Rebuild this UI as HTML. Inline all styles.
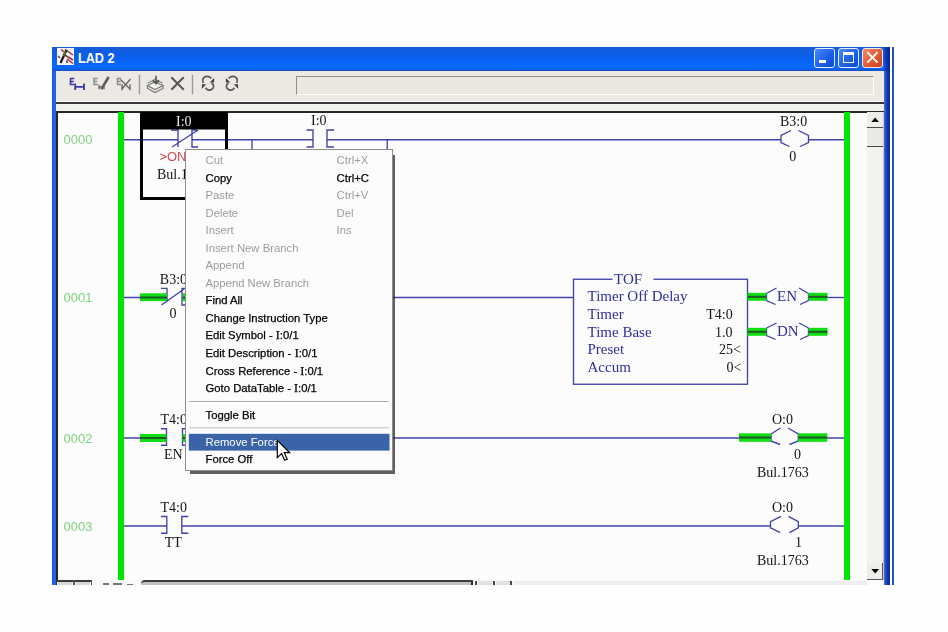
<!DOCTYPE html>
<html><head><meta charset="utf-8">
<style>
*{margin:0;padding:0;box-sizing:border-box}
html,body{width:948px;height:632px;overflow:hidden;background:#fefefe;font-family:"Liberation Sans",sans-serif}
.a{position:absolute}
#win{left:52px;top:47px;width:838px;height:538px;background:#0a5ae0;overflow:hidden}
#title{left:0;top:0;width:838px;height:24px;background:linear-gradient(#1a5cd6 0%,#0d5de4 25%,#0862f4 55%,#0a69ff 80%,#0a62f0 92%,#1e4cb8 100%)}
#ttext{left:25.5px;top:2.5px;color:#fff;font:bold 14px "Liberation Sans",sans-serif;transform:scaleX(0.9);transform-origin:0 0;white-space:nowrap}
#tb{left:4px;top:24px;width:828px;height:32px;background:#ece9e4}
#edit{left:239.5px;top:5px;width:578.5px;height:19px;border-top:1px solid #8e9384;border-left:1px solid #8e9384;border-bottom:1px solid #fff;border-right:1px solid #fff;background:#ebe8e2}
#content{left:5.5px;top:65.5px;width:826.5px;height:473px;background:#fcfcfc}
svg{position:absolute;left:0;top:0;will-change:transform}
.sf{font-family:"Liberation Serif",serif}
.ss{font-family:"Liberation Sans",sans-serif}
</style></head><body>
<div id="win" class="a">
  <div id="title" class="a"></div>
  <div id="ttext" class="a">LAD 2</div>
  <div class="a" style="left:831px;top:0;width:7px;height:24px;background:linear-gradient(90deg,rgba(10,40,160,0),#0a2a9a 70%,#0a2a90)"></div>
  <div id="tb" class="a">
    <div id="edit" class="a"></div>
  </div>
  <div class="a" style="left:4px;top:54px;width:828px;height:1px;background:#fbfaf8"></div>
  <div class="a" style="left:4px;top:55px;width:828px;height:2px;background:#3a3a3a"></div>
  <div class="a" style="left:4px;top:57px;width:828px;height:7px;background:#f3f1ec"></div>
  <div class="a" style="left:4px;top:64px;width:828px;height:1.5px;background:#262626"></div>
  <div class="a" style="left:4px;top:64px;width:1.5px;height:474px;background:#262626"></div>
  <div id="content" class="a"></div>
</div>
<div class="a" style="left:892px;top:47px;width:2px;height:538px;background:#2050c8"></div>
<svg width="948" height="632" viewBox="0 0 948 632">
 <g id="ladder">
  <!-- rails -->
  <rect x="118" y="112" width="6" height="468" fill="#00e400"/>
  <rect x="844" y="112" width="6" height="468" fill="#00e400"/>
  <!-- rung numbers -->
  <g class="ss" font-size="13" fill="#80d480">
   <text x="63.5" y="144">0000</text>
   <text x="63.5" y="302">0001</text>
   <text x="63.5" y="442.5">0002</text>
   <text x="63.5" y="530.5">0003</text>
  </g>
  <g stroke="#4242ac" stroke-width="1.35" fill="none">
   <!-- rung 0 -->
   <path d="M124 139.75H178M192 139.75H313M327 139.75H781M809 139.75H844"/>
   <path d="M171 130H178V147M198 130H192V147H198M172 147L198 130"/>
   <path d="M306.5 130H313V147H306.5M334 130H327V147H334"/>
   <path d="M252 139.75V150M387.25 139.75V150"/>
   <path d="M791 130.5L781 135.5V142.5L789.5 146.5M798.5 130.5L808.5 135.5V142.5L800 146.5"/>
   <!-- rung 1 -->
   <path d="M124 297.5H140M392 297.5H573.5"/>
   <path d="M161 288.3H167V302M186 288.3H182V305H186M161.5 305L184 289"/>
   <rect x="573.5" y="279.25" width="174" height="105"/>
   <path d="M766.5 293.5L776.5 288M766.5 293.5V300.5L775.5 304.5M808.5 293.5L799 288M808.5 293.5V300.5L800 304.5"/>
   <path d="M766.5 328L776.5 323M766.5 328V335.5L775.5 339.5M808.5 328L799 323M808.5 328V335.5L800 339.5"/>
   <path d="M827 297.5H844"/>
   <!-- rung 2 -->
   <path d="M124 438H140M392 438H739M827 438H844"/>
   <path d="M161 428.7H166.5V445.2H161M188 428.7H182.5V445.2H188"/>
   <path d="M780.5 428L771 434V441L780 444.5M788 428L798.3 434V441L789.5 444.5"/>
   <!-- rung 3 -->
   <path d="M124 526H167M182 526H770.5M798.3 526H844"/>
   <path d="M161 516.5H166.8V533.2H161M188.3 516.5H181.8V533.2H188.3"/>
   <path d="M781 516.3L770.5 521.6V527.8L780.2 532.6M788.4 516.3L798.3 521.6V527.8L789.4 532.6"/>
  </g>
  <!-- energized bars -->
  <g>
   <rect x="140" y="293.3" width="27" height="7.8" fill="#12dc12"/>
   <rect x="182.5" y="293.3" width="10" height="7.8" fill="#12dc12"/>
   <rect x="747.5" y="292.8" width="19" height="8" fill="#12dc12"/>
   <rect x="808.5" y="292.8" width="19" height="8" fill="#12dc12"/>
   <rect x="747.5" y="327.8" width="19" height="8" fill="#12dc12"/>
   <rect x="808.5" y="327.8" width="19" height="8" fill="#12dc12"/>
   <rect x="140" y="434" width="26.5" height="8" fill="#12dc12"/>
   <rect x="182.5" y="434" width="10" height="8" fill="#12dc12"/>
   <rect x="739" y="433.3" width="32" height="8.5" fill="#12dc12"/>
   <rect x="798.3" y="433.3" width="29" height="8.5" fill="#12dc12"/>
   <g fill="#1d5a2a">
    <rect x="140" y="296.5" width="27" height="2"/>
    <rect x="182.5" y="296.5" width="10" height="2"/>
    <rect x="747.5" y="295.8" width="19" height="2"/>
    <rect x="808.5" y="295.8" width="19" height="2"/>
    <rect x="747.5" y="330.8" width="19" height="2"/>
    <rect x="808.5" y="330.8" width="19" height="2"/>
    <rect x="140" y="437" width="26.5" height="2"/>
    <rect x="182.5" y="437" width="10" height="2"/>
    <rect x="739" y="436.5" width="32" height="2"/>
    <rect x="798.3" y="436.5" width="29" height="2"/>
   </g>
  </g>
  <!-- selection box -->
  <path d="M141.5 113.5H226.5V198.5H141.5Z" fill="none" stroke="#000" stroke-width="3"/>
  <rect x="140" y="112" width="88" height="17.5" fill="#000"/>
  <!-- labels -->
  <g class="sf" font-size="14" fill="#141414">
   <text x="176" y="125.5" fill="#e8e8e8">I:0</text>
   <text x="311" y="125.3">I:0</text>
   <text x="780" y="125.7">B3:0</text>
   <text x="789.3" y="160.5">0</text>
   <text x="157" y="178.6">Bul.1763</text>
   <text x="159.8" y="283.5">B3:0</text>
   <text x="169.6" y="318.3">0</text>
   <text x="706.2" y="318.7">T4:0</text>
   <text x="715" y="336.7">1.0</text>
   <text x="719" y="354.2">25&lt;</text>
   <text x="726.5" y="371.6">0&lt;</text>
   <text x="160.5" y="424.1">T4:0</text>
   <text x="163.9" y="459">EN</text>
   <text x="772" y="423.6">O:0</text>
   <text x="794" y="459">0</text>
   <text x="757" y="476.8">Bul.1763</text>
   <text x="160.5" y="512.2">T4:0</text>
   <text x="164.7" y="547">TT</text>
   <text x="772" y="512.3">O:0</text>
   <text x="795" y="547.1">1</text>
   <text x="757" y="564.7">Bul.1763</text>
  </g>
  <text class="ss" x="159.4" y="160.6" font-size="13" fill="#d04848">&gt;ON</text>
  <g class="sf" font-size="15" fill="#2e2e9c">
   <rect x="612.5" y="272" width="41" height="12" fill="#fcfcfc"/>
   <text x="614" y="284">TOF</text>
   <text x="587.5" y="301.4">Timer Off Delay</text>
   <text x="587.5" y="318.7">Timer</text>
   <text x="587.5" y="336.7">Time Base</text>
   <text x="587.5" y="354.2">Preset</text>
   <text x="587.5" y="371.6">Accum</text>
   <text x="777" y="300.5" font-size="15">EN</text>
   <text x="777" y="335.5" font-size="15">DN</text>
  </g>
 </g>
</svg>

<!-- vertical scrollbar -->
<div class="a" style="left:867px;top:112px;width:16px;height:468px;background:#f3f2ef"></div>
<div class="a" style="left:867px;top:112px;width:16px;height:16px;background:#efeeea;border-bottom:1px solid #4a4a4a"></div>
<svg class="a" style="left:867px;top:112px" width="16" height="16"><path d="M4.3 10H12L8.2 5.6Z" fill="#000"/></svg>
<div class="a" style="left:867px;top:128px;width:16px;height:18.5px;background:#ebe9e3;border-bottom:1.5px solid #454545"></div>
<div class="a" style="left:867px;top:563px;width:16px;height:17px;background:#efeeea;border-right:1.5px solid #555;border-bottom:1.5px solid #555"></div>
<svg class="a" style="left:867px;top:563px" width="16" height="16"><path d="M4.3 6H12L8.2 10.4Z" fill="#000"/></svg>
<div class="a" style="left:882.5px;top:112px;width:1.5px;height:468px;background:#c8c6c0"></div>
<!-- bottom bar -->
<div class="a" style="left:57px;top:580px;width:810px;height:5px;background:#fafafa"></div>
<div class="a" style="left:56px;top:580px;width:36px;height:1.5px;background:#3a3a3a"></div>
<div class="a" style="left:73px;top:580px;width:1.5px;height:5px;background:#555"></div>
<div class="a" style="left:90.5px;top:580px;width:1.5px;height:5px;background:#555"></div>
<div class="a" style="left:58px;top:582px;width:14px;height:3px;background:#d8d8d8"></div>
<div class="a" style="left:76px;top:582px;width:14px;height:3px;background:#d8d8d8"></div>
<div class="a" style="left:141px;top:580px;width:332px;height:5px;background:#c2c2c2;border-top:2px solid #3c3c3c;border-top-left-radius:4px;border-right:2px solid #222"></div>
<div class="a" style="left:103px;top:583px;width:6px;height:2px;background:#777"></div>
<div class="a" style="left:113px;top:583px;width:9px;height:2px;background:#777"></div>
<div class="a" style="left:127px;top:584px;width:6px;height:1px;background:#777"></div>
<div class="a" style="left:475px;top:580.5px;width:2px;height:4.5px;background:#444"></div>
<div class="a" style="left:478px;top:581px;width:14px;height:4px;background:#e2e2e2"></div>
<div class="a" style="left:492.5px;top:580.5px;width:2px;height:4.5px;background:#444"></div>
<div class="a" style="left:496px;top:581px;width:14px;height:4px;background:#e2e2e2"></div>
<div class="a" style="left:510px;top:580.5px;width:2px;height:4.5px;background:#444"></div>
<div class="a" style="left:513px;top:581px;width:354px;height:4px;background:#efefef"></div>
<!-- window right border -->
<div class="a" style="left:884px;top:71px;width:6px;height:514px;background:linear-gradient(90deg,#3a7ae8 0,#2454c4 25%,#1838a8 55%,#0c2890 100%)"></div>
<div class="a" style="left:52px;top:71px;width:4px;height:514px;background:linear-gradient(90deg,#1050d8,#2a6ae8 60%,#1a58d8)"></div>

<!-- title icon -->
<svg class="a" style="left:57px;top:48px" width="17" height="17" viewBox="0 0 17 17">
 <rect width="17" height="17" fill="#f6f2f2"/>
 <path d="M4 1.5L7 4M8 1.5L16 7M6 6L16 12M10 11L16 15.5M1 8L3 10" stroke="#9a3030" stroke-width="1.5"/>
 <path d="M10 12.5V15" stroke="#503070" stroke-width="1.6"/>
 <path d="M9.5 2L3.5 15" stroke="#1a1a1a" stroke-width="2.2"/>
 <path d="M8.5 3.5L6.5 8" stroke="#4a9a4a" stroke-width="1.2"/>
</svg>
<!-- title buttons -->
<div class="a" style="left:813.5px;top:47.5px;width:21.5px;height:20.5px;border:1px solid #e8eefc;border-radius:3px;background:linear-gradient(135deg,#4a8af8,#1a5ee8 60%,#0c4ad0)"></div>
<div class="a" style="left:819px;top:59.5px;width:7px;height:3px;background:#fff"></div>
<div class="a" style="left:837.5px;top:47.5px;width:21.5px;height:20.5px;border:1px solid #e8eefc;border-radius:3px;background:linear-gradient(135deg,#4a8af8,#1a5ee8 60%,#0c4ad0)"></div>
<div class="a" style="left:842.5px;top:51.8px;width:11.8px;height:10.8px;border:1.6px solid #f4f8ff;border-top-width:3px"></div>
<div class="a" style="left:861.5px;top:47.5px;width:21.5px;height:20.5px;border:1px solid #f0e8e4;border-radius:3px;background:linear-gradient(135deg,#f08a6a,#e05a34 55%,#c8401a)"></div>
<svg class="a" style="left:861.5px;top:47.5px" width="21.5" height="20.5"><path d="M5.3 4.3L15.6 14.6M15.6 4.3L5.3 14.6" stroke="#fbf4ee" stroke-width="2"/></svg>

<!-- toolbar icons -->
<svg class="a" style="left:64px;top:72px" width="180" height="24" viewBox="0 0 180 24">
 <g fill="none" stroke-linecap="square">
  <path d="M9.5 6.5H6.5V12.5H9.5M6.5 9.5H9" stroke="#3a3aa0" stroke-width="1.6"/>
  <path d="M11.2 12.5V17M20 12.5V17M11.2 14.8H20" stroke="#3a3aa0" stroke-width="1.8"/>
  <path d="M33 6.5H30V12.5H33M30 9.5H32.5" stroke="#8a8a8a" stroke-width="1.4"/>
  <path d="M44 6L38 16" stroke="#5a5a5a" stroke-width="2.6"/>
  <path d="M35 16.5V13.5M40 16.5V13.5M35 15H40" stroke="#6a6a6a" stroke-width="1.4"/>
  <path d="M56.5 6.5H53.5V12.5H56.5M53.5 9.5H56" stroke="#8a8a8a" stroke-width="1.4"/>
  <path d="M57 8L66 17M66 7.5L58 17M58 13V17.5M66 13V17.5" stroke="#6a6a6a" stroke-width="1.4"/>
  <path d="M75.5 3.5V21.5" stroke="#9a9a9a" stroke-width="1.4"/>
  <path d="M83.5 13.5L91 10L99 13.5L91 17.5Z" stroke="#7a7a7a" stroke-width="1.2" fill="#f4f4f4"/>
  <path d="M83.5 13.5V16.5L91 20.5L99 16.5V13.5" stroke="#7a7a7a" stroke-width="1.2"/>
  <path d="M84 11L91 7.5L98 11" stroke="#8a8a8a" stroke-width="1.2"/>
  <path d="M92 4.5V11M89.5 9L92 11.5L94.5 9" stroke="#555" stroke-width="1.6"/>
  <path d="M108 6L119 17M119 6L108 17" stroke="#555" stroke-width="2"/>
  <path d="M128.5 3.5V21.5" stroke="#9a9a9a" stroke-width="1.4"/>
  <g transform="translate(137.5,4)">
   <path d="M1.6 6.2C0.2 3.8 2 0.6 5.2 0.4C7 0.3 8.4 0.9 9.2 1.8" stroke="#555" stroke-width="1.7"/>
   <path d="M8.2 6.6H12.6V2Z" fill="#444" stroke="none"/>
   <path d="M10.6 7.6C12.6 8.6 12.8 12.2 9.8 13.6C7.8 14.4 5.6 13.8 4.6 12.4" stroke="#555" stroke-width="1.7"/>
   <path d="M0.4 12.8V8.2H4.8Z" fill="#444" stroke="none"/>
  </g>
  <g transform="translate(174.5,4) scale(-1,1)">
   <path d="M1.6 6.2C0.2 3.8 2 0.6 5.2 0.4C7 0.3 8.4 0.9 9.2 1.8" stroke="#555" stroke-width="1.7"/>
   <path d="M8.2 6.6H12.6V2Z" fill="#444" stroke="none"/>
   <path d="M10.6 7.6C12.6 8.6 12.8 12.2 9.8 13.6C7.8 14.4 5.6 13.8 4.6 12.4" stroke="#555" stroke-width="1.7"/>
   <path d="M0.4 12.8V8.2H4.8Z" fill="#444" stroke="none"/>
  </g>
 </g>
</svg>

<!-- context menu -->
<div class="a" style="left:190px;top:155px;width:205px;height:319px;background:rgba(30,30,30,0.7);filter:blur(0.7px)"></div>
<div class="a" id="menu" style="left:185px;top:148.5px;width:208px;height:322px;background:#fcfcfc;border:1px solid #8c8c8c">
</div>
<svg class="a" style="left:0;top:0" width="948" height="632">
<rect x="188.8" y="433.8" width="200.7" height="16.8" fill="#3a63a8"/>
<rect x="189.3" y="401" width="199.5" height="1" fill="#a8a8a8"/><rect x="189.3" y="402" width="199.5" height="1" fill="#ffffff"/>
<rect x="189.3" y="427.5" width="199.5" height="1" fill="#a8a8a8"/><rect x="189.3" y="428.5" width="199.5" height="1" fill="#ffffff"/>
<g font-family="Liberation Sans" font-size="11.3">
<text x="205.5" y="164.2" fill="#9c9c9c">Cut</text>
<text x="336.6" y="164.2" fill="#9c9c9c">Ctrl+X</text>
<text x="205.5" y="181.7" fill="#000" stroke="#000" stroke-width="0.25">Copy</text>
<text x="336.6" y="181.7" fill="#000" stroke="#000" stroke-width="0.25">Ctrl+C</text>
<text x="205.5" y="199.2" fill="#9c9c9c">Paste</text>
<text x="336.6" y="199.2" fill="#9c9c9c">Ctrl+V</text>
<text x="205.5" y="216.7" fill="#9c9c9c">Delete</text>
<text x="336.6" y="216.7" fill="#9c9c9c">Del</text>
<text x="205.5" y="234.2" fill="#9c9c9c">Insert</text>
<text x="336.6" y="234.2" fill="#9c9c9c">Ins</text>
<text x="205.5" y="251.7" fill="#9c9c9c">Insert New Branch</text>
<text x="205.5" y="269.2" fill="#9c9c9c">Append</text>
<text x="205.5" y="286.7" fill="#9c9c9c">Append New Branch</text>
<text x="205.5" y="304.2" fill="#000" stroke="#000" stroke-width="0.25">Find All</text>
<text x="205.5" y="321.7" fill="#000" stroke="#000" stroke-width="0.25">Change Instruction Type</text>
<text x="205.5" y="339.2" fill="#000" stroke="#000" stroke-width="0.25">Edit Symbol - <tspan font-family="Liberation Serif" font-size="12">I</tspan>:0/1</text>
<text x="205.5" y="356.7" fill="#000" stroke="#000" stroke-width="0.25">Edit Description - <tspan font-family="Liberation Serif" font-size="12">I</tspan>:0/1</text>
<text x="205.5" y="374.7" fill="#000" stroke="#000" stroke-width="0.25">Cross Reference - <tspan font-family="Liberation Serif" font-size="12">I</tspan>:0/1</text>
<text x="205.5" y="392.2" fill="#000" stroke="#000" stroke-width="0.25">Goto DataTable - <tspan font-family="Liberation Serif" font-size="12">I</tspan>:0/1</text>
<text x="205.5" y="419.0" fill="#000" stroke="#000" stroke-width="0.25">Toggle Bit</text>
<text x="205.5" y="445.7" fill="#fff">Remove Force</text>
<text x="205.5" y="463.1" fill="#000" stroke="#000" stroke-width="0.25">Force Off</text>
</g>
<g transform="translate(277.3,440.4) scale(1.08)"><path d="M0 0V16L4 12.2L6.8 18.4L9.2 17.4L6.5 11.4H11.5Z" fill="#fff" stroke="#000" stroke-width="1.1" stroke-linejoin="miter"/></g>
</svg>
</body></html>
